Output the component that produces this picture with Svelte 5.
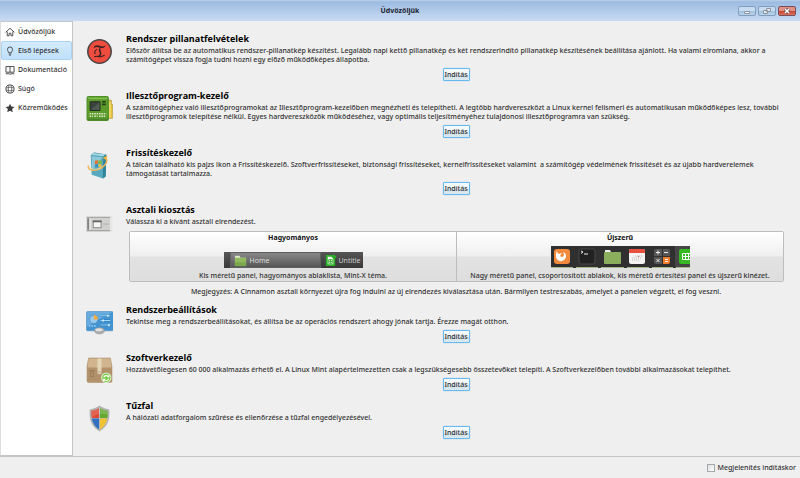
<script lang="ts">
  type Section = {
    id: string;
    title: string;
    lines: string[];
  };

  const before: Section[] = [
    {
      id: 'timeshift',
      title: 'Rendszer pillanatfelvételek',
      lines: [
        'Először állítsa be az automatikus rendszer-pillanatkép készítést. Legalább napi kettő pillanatkép és két rendszerindító pillanatkép készítésének beállítása ajánlott. Ha valami elromlana, akkor a',
        'számítógépet vissza fogja tudni hozni egy előző működőképes állapotba.'
      ]
    },
    {
      id: 'drivers',
      title: 'Illesztőprogram-kezelő',
      lines: [
        'A számítógéphez való illesztőprogramokat az Illesztőprogram-kezelőben megnézheti és telepítheti. A legtöbb hardvereszközt a Linux kernel felismeri és automatikusan működőképes lesz, további',
        'illesztőprogramok telepítése nélkül. Egyes hardvereszközök működéséhez, vagy optimális teljesítményéhez tulajdonosi illesztőprogramra van szükség.'
      ]
    },
    {
      id: 'updates',
      title: 'Frissítéskezelő',
      lines: [
        'A tálcán található kis pajzs ikon a Frissítéskezelő. Szoftverfrissítéseket, biztonsági frissítéseket, kernelfrissítéseket valamint  a számítógép védelmének frissítését és az újabb hardverelemek',
        'támogatását tartalmazza.'
      ]
    }
  ];

  const after: Section[] = [
    {
      id: 'settings',
      title: 'Rendszerbeállítások',
      lines: ['Tekintse meg a rendszerbeállításokat, és állítsa be az operációs rendszert ahogy jónak tartja. Érezze magát otthon.']
    },
    {
      id: 'software',
      title: 'Szoftverkezelő',
      lines: ['Hozzávetőlegesen 60 000 alkalmazás érhető el. A Linux Mint alapértelmezetten csak a legszükségesebb összetevőket telepíti. A Szoftverkezelőben további alkalmazásokat telepíthet.']
    },
    {
      id: 'firewall',
      title: 'Tűzfal',
      lines: ['A hálózati adatforgalom szűrése és ellenőrzése a tűzfal engedélyezésével.']
    }
  ];

  const pages = [
    { id: 'home', label: 'Üdvözöljük' },
    { id: 'bulb', label: 'Első lépések' },
    { id: 'book', label: 'Dokumentáció' },
    { id: 'help', label: 'Súgó' },
    { id: 'star', label: 'Közreműködés' }
  ];

  let page = $state('bulb');
  let showAtStartup = $state(false);
</script>

{#snippet navIcon(id: string)}
  <svg class="nav-icon" viewBox="0 0 16 16" aria-hidden="true">
    {#if id === 'home'}
      <path d="M1 8.500 8 2l7 6.500M3.500 7.500V14h3v-4h3v4h3V7.500" />
    {:else if id === 'bulb'}
      <path d="M6 11C6 9 4 8.500 4 5.500a4 4 0 0 1 8 0C12 8.500 10 9 10 11ZM6 13h4M7 15h2" />
    {:else if id === 'book'}
      <path d="M1.500 2.500h13v9h-13ZM8 2.500v9M1 14h5.500l1.500 1 1.500-1H15" />
    {:else if id === 'help'}
      <circle cx="8" cy="8" r="6.500" />
      <path d="M6 2v12M10 2v12M2 6h12M2 10h12" stroke-width="1.200" />
      <circle cx="8" cy="8" r="2" fill="#fff" stroke="none" />
    {:else}
      <path class="solid" d="m8 1 2.100 4.700 5.100.6-3.800 3.400 1 5L8 12.200l-4.400 2.500 1-5L.8 6.300l5.100-.6Z" />
    {/if}
  </svg>
{/snippet}

{#snippet appIcon(id: string)}
  <svg class="app-icon" viewBox="0 0 52 52" aria-hidden="true">
    {#if id === 'timeshift'}
      <circle cx="26" cy="26" r="22.500" fill="#ee4c3f" stroke="#4c4545" stroke-width="3" />
      <path d="M15 19c1-5 6-6 11-4 5 2 8 2 12-1-2 5-6 6-11 5-4-1-9-3-10 0Z" fill="#35211f" />
      <path d="M27 20c-3 4 2 7 1 11 0 2-2 4-4 5" fill="none" stroke="#35211f" stroke-width="3" />
      <path d="M21 22c-5 3-5 6-3 9M16 36c5-3 8 1 12 0 4 0 5-3 8-2" fill="none" stroke="#35211f" stroke-width="2" />
    {:else if id === 'drivers'}
      <path d="M34 10h15v8h2v27H34Z" fill="#e5c33c" stroke="#a58a28" />
      <path d="M46 14v29" stroke="#fae991" stroke-width="2" />
      <rect x="2" y="3" width="41" height="46" rx="3" fill="#5b9b2c" stroke="#4d8e27" stroke-width="2" />
      <path d="M4 5h37v3H4Z" fill="#83bd50" />
      <rect x="8" y="13" width="19" height="17" rx="1" fill="#39423c" stroke="#24301f" stroke-width="2" />
      <path d="m9 29 17-15v15Z" fill="#4f5a52" />
      <path d="M31 13h7M31 18h7" stroke="#263d17" stroke-width="3" />
      <path d="M7 36h32M7 41h6m3 0h6m3 0h12" stroke="#dbe6c5" stroke-width="3" stroke-dasharray="3 1.500" />
      <path d="M3 47h40" stroke="#4b8329" stroke-width="3" />
    {:else if id === 'updates'}
      <path d="m10 5 6-4 23 4-2 42-6 4Z" fill="#256f84" />
      <path d="m9 6 25 2-1 43-22-7Z" fill="#58a9c0" />
      <path d="m9 6 6-4 24 3-5 3Z" fill="#a3dbe7" />
      <path d="m34 8 5-3-1 42-5 4Z" fill="#2b8499" />
      <path d="m11 8 21 2-20 24Z" fill="#a5d5df" opacity=".7" />
      <path d="m17 17 6-1v6l-6 1Z" fill="#e86c2a" />
      <path d="m24 16 6 1v6l-6-1Z" fill="#82bb3a" />
      <path d="m17 24 6-1v6l-6-1Z" fill="#378ac4" />
      <path d="m24 23 6 1v6l-6-1Z" fill="#edc448" />
      <path d="M5 26c-4 9 12 12 23 6 12-7 15-16 9-21" fill="none" stroke="#efb55a" stroke-width="3" />
      <path d="m32 11 9-4-1 9Z" fill="#f5b63f" />
      <path d="M6 27c1 7 15 8 23 3" fill="none" stroke="#fae5a7" stroke-width="1.500" />
    {:else if id === 'desktop'}
      <path d="M1 16h50v27H1Z" fill="#d0d0ce" />
      <path d="M1 16h48M1 42h48" stroke="#969694" stroke-width="2" />
      <path d="M4 18v22" stroke="#777" stroke-width="3" />
      <path d="M8 18v22" stroke="#e9e9e7" stroke-width="2" />
      <rect x="14" y="23" width="15" height="13" fill="#f5f5f4" stroke="#8d8d8b" stroke-width="2" />
      <path d="M13 24h17" stroke="#626260" stroke-width="3" />
      <path d="M33 29h11" stroke="#b2b2b0" stroke-width="2" />
      <path d="M46 15h6v29h-6Z" fill="#efefef" opacity=".7" />
    {:else if id === 'settings'}
      <rect x="1" y="5" width="51" height="37" rx="2" fill="#4594d2" stroke="#4188be" />
      <path d="M2 6h49L2 33Z" fill="#78b8e7" opacity=".7" />
      <circle cx="15" cy="20" r="8" fill="#9acbee" stroke="#3879b5" />
      <path d="M15 20V11a9 9 0 0 1 8 9Z" fill="#f2aa43" />
      <path d="M28 13h19M28 22h19M28 31h19" stroke="#2878bb" stroke-width="4" />
      <path d="M28 13h19M28 22h19M28 31h19" stroke="#a0d9fa" stroke-width="2" />
      <path d="M42 11v4M33 20v4M44 29v4" stroke="#d7edf9" stroke-width="3" />
      <path d="M7 34v-3m5 3v-3m5 3v-3" stroke="#8fc8ee" stroke-width="3" />
      <ellipse cx="26" cy="42" rx="10" ry="6" fill="#a8aaac" stroke="#999" />
      <ellipse cx="25" cy="40" rx="7" ry="3" fill="#e2e3e4" />
    {:else if id === 'software'}
      <path d="M5 2h42l3 16v28q0 3-3 3H5q-3 0-3-3V18Z" fill="#b99970" stroke="#a18562" />
      <path d="M5 3h42l2 17H3Z" fill="#d0b58e" />
      <path d="M3 21h46v26H3Z" fill="#b0916a" />
      <path d="M22 3h8v25h-8Z" fill="#e4d4b6" />
      <path d="M22 28h8v5h-8Z" fill="#d9c8a8" />
      <path d="M7 26h9M7 38h9M9 27v9m5-9v9" stroke="#967752" stroke-width="1.500" />
      <circle cx="39" cy="40" r="9" fill="#7ccb48" stroke="#e2f0d7" stroke-width="2" />
      <path d="M34 39c2-4 7-4 10-1M44 42c-2 4-7 4-10 1" fill="none" stroke="#fff" stroke-width="2" />
      <path d="m45 34v5h-5ZM33 47v-5h5Z" fill="#fff" />
    {:else}
      <path d="M26 2C19 7 13 8 8 9c-2 20 4 33 18 41 14-8 20-21 18-41-5-1-11-2-18-7Z" fill="#b4b8ba" stroke="#999" />
      <path d="M25 6v19H11c-1-4-1-8-1-14 6-1 10-2 15-5Z" fill="#df4934" />
      <path d="M27 6c5 3 9 4 15 5 0 6 0 10-1 14H27Z" fill="#67a832" />
      <path d="M11 26h14v21c-8-5-12-12-14-21Z" fill="#326fc1" />
      <path d="M27 26h14c-2 9-6 16-14 21Z" fill="#f0c431" />
      <path d="M10 11c6-1 11-3 16-6 5 3 10 5 16 6v7c-13-3-23-1-32 7Z" fill="#fff" opacity=".15" />
    {/if}
  </svg>
{/snippet}

{#snippet sectionRow(section: Section)}
  <section>
    {@render appIcon(section.id)}
    <div class="body">
      <h2>{section.title}</h2>
      <p>{section.lines.join('\n')}</p>
      <button class="launch">Indítás</button>
    </div>
  </section>
{/snippet}

<div class="window">
  <header>
    <h1>Üdvözöljük</h1>
    <div class="controls">
      <button aria-label="Kis méret">
        <svg viewBox="0 0 18 10"><path d="M6.500 5.500h5v2h-5Z" fill="#f5f7f9" stroke="#8b96a5" /></svg>
      </button>
      <button aria-label="Előző méret">
        <svg viewBox="0 0 18 10"><path d="M8.500 2.500h4v3h-4ZM5.500 4.500h4v3h-4Z" fill="#e4e8ed" stroke="#8b96a5" /></svg>
      </button>
      <button class="close" aria-label="Bezárás">
        <svg viewBox="0 0 18 10"><path d="m7 3 4 4m0-4-4 4" stroke="#71494a" stroke-width="3" /><path d="m7 3 4 4m0-4-4 4" stroke="#fff" stroke-width="1.500" /></svg>
      </button>
    </div>
  </header>

  <div class="main">
    <nav>
      {#each pages as item}
        <button class:active={page === item.id} onclick={() => (page = item.id)}>
          {@render navIcon(item.id)}
          <span>{item.label}</span>
        </button>
      {/each}
    </nav>

    <main>
      {#each before as section}
        {@render sectionRow(section)}
      {/each}

      <section class="layout-section">
        {@render appIcon('desktop')}
        <div class="body">
          <h2>Asztali kiosztás</h2>
          <p>Válassza ki a kívánt asztali elrendezést.</p>
          <div class="choices">
            <button>
              <strong>Hagyományos</strong>
              <span class="preview">
                <span class="panel classic">
                  <span class="task current">
                    <svg viewBox="0 0 14 14" aria-hidden="true">
                      <path d="M1 2h5l1 2h6v9H1Z" fill="#dce8c9" />
                      <path d="M1 4h12v9H1Z" fill="#91b95e" />
                      <path d="M1 9h12v4H1Z" fill="#7ba74b" />
                    </svg>
                    Home
                  </span>
                  <span class="task">
                    <svg viewBox="0 0 14 14" aria-hidden="true">
                      <path d="M2 1h7l3 3v9H2Z" fill="#2cae28" />
                      <path d="M4 3h4l2 2v6H4Z" fill="#f2faed" />
                      <path d="M5 6h4v4H5Zm0 2h4M7 6v4" fill="none" stroke="#41b13b" />
                      <path d="m10 1 3 3" stroke="#2cae28" stroke-width="2" />
                    </svg>
                    Untitle
                  </span>
                </span>
              </span>
              <span>Kis méretű panel, hagyományos ablaklista, Mint-X téma.</span>
            </button>
            <button>
              <strong>Újszerű</strong>
              <span class="preview">
                <svg class="panel modern" viewBox="0 0 139 22" aria-hidden="true">
                  <path d="M0 0h139v22H0Z" fill="#303030" />
                  <path d="M124 0h15v22h-15Z" fill="#464646" />
                  <path d="M0 21.500h22m3 0h22m3 0h23m3 0h22m3 0h21m3 0h14" stroke="#a3b98a" />
                  <rect x="3" y="3" width="16" height="15" rx="3" fill="#f38b3c" />
                  <path d="M6 5q0 2 2 3l3-1-2 3c2 2 4 1 4-2l-1-2c3 1 4 4 2 7-3 4-9 2-9-3 0-2 0-3 1-5Z" fill="#fff" />
                  <rect x="28" y="3" width="16" height="15" rx="2" fill="#222" stroke="#474747" />
                  <path d="m30 5 2 1-2 1.500M33 8h4" fill="none" stroke="#eee" />
                  <path d="M54 4h5l1 2h9v5H54Z" fill="#edf0e7" />
                  <rect x="53" y="6" width="17" height="12" rx="1" fill="#8bae5c" />
                  <rect x="78" y="3" width="16" height="15" rx="2" fill="#f4f3f2" />
                  <path d="M78 7V5q0-2 2-2h12q2 0 2 2v2Z" fill="#e84f3e" />
                  <path d="M84 10h7M81 12h10M81 14h7" stroke="#bbb" stroke-dasharray="1 1" />
                  <path d="M87 10h1v1h-1Z" fill="#e87062" />
                  <path d="M105 3h6v7h-8V5q0-2 2-2Zm7 0h5q2 0 2 2v5h-7ZM103 11h8v7h-6q-2 0-2-2Z" fill="#575757" />
                  <path d="M112 11h7v5q0 2-2 2h-5Z" fill="#f17d29" />
                  <path d="M105 6.500h4M107 4.500v4M113 6.500h4M105.500 13l3 3m0-3-3 3M114 13.500h3m-3 2h3" stroke="#eee" />
                  <path d="M139 3h-9q-2 0-2 2v11q0 2 2 2h9Z" fill="#35b820" />
                  <path d="M131.500 7.500h8m-8 3h8m-8 3h8m-8-6v6m3-6v6m3-6v6" stroke="#fff" />
                </svg>
              </span>
              <span>Nagy méretű panel, csoportosított ablakok, kis méretű értesítési panel és újszerű kinézet.</span>
            </button>
          </div>
          <p class="note">Megjegyzés: A Cinnamon asztali környezet újra fog indulni az új elrendezés kiválasztása után. Bármilyen testreszabás, amelyet a panelen végzett, el fog veszni.</p>
        </div>
      </section>

      {#each after as section}
        {@render sectionRow(section)}
      {/each}
    </main>
  </div>

  <footer>
    <label>
      <input type="checkbox" bind:checked={showAtStartup} />
      Megjelenítés indításkor
    </label>
  </footer>
</div>

<style>
  :global(body) {
    margin: 0;
    background: #efefef;
  }

  .window {
    display: flex;
    flex-direction: column;
    min-height: 100vh;
    color: #303030;
    font-family: 'Noto Sans', 'Open Sans', sans-serif;
    font-size: 7px;
    font-weight: 500;
    line-height: 9px;
  }

  button {
    padding: 0;
    color: inherit;
    font: inherit;
  }

  header {
    display: grid;
    grid-template-columns: 1fr auto 1fr;
    align-items: center;
    height: 21px;
    background: linear-gradient(#b9cfeb 0, #9dbce2 2px, #c9dbf3 100%);
  }

  h1 {
    grid-column: 2;
    margin: 0;
    color: #1d2532;
    font-size: 7px;
    font-weight: 700;
  }

  .controls {
    display: flex;
    justify-content: flex-end;
    gap: 2px;
    padding-right: 4px;
  }

  .controls button {
    display: flex;
    align-items: center;
    justify-content: center;
    width: 18px;
    height: 10px;
    border: 1px solid #829dbd;
    border-radius: 2px;
    background: linear-gradient(#c8dcf1 50%, #a0c0df 50%, #bad4eb);
  }

  .controls svg {
    flex: none;
    width: 18px;
    height: 10px;
  }

  .controls .close {
    border-color: #7c4c5b;
    background: linear-gradient(#df9183 50%, #c4412e 50%, #d97661);
  }

  .main {
    display: flex;
    flex: 1;
  }

  nav {
    flex: none;
    box-sizing: border-box;
    width: 73px;
    border: 1px solid #c4c4c4;
    border-left-color: #ddd;
    background: #fff;
  }

  nav button {
    display: flex;
    align-items: center;
    gap: 3px;
    box-sizing: border-box;
    width: 100%;
    height: 19px;
    padding-left: 3px;
    border: 1px solid transparent;
    background: none;
    white-space: nowrap;
  }

  nav button.active {
    border-color: #acd3f2;
    border-radius: 2px;
    background: linear-gradient(#d3eafe, #bfe0fc);
  }

  .nav-icon {
    flex: none;
    width: 10px;
    height: 10px;
    fill: none;
    stroke: #444;
    stroke-width: 1.5;
  }

  .nav-icon .solid {
    fill: #3c3c3c;
    stroke: none;
  }

  main {
    flex: 1;
    min-width: 0;
    padding: 12px 14px 0 13px;
  }

  section {
    display: flex;
    gap: 13px;
    padding-bottom: 9px;
  }

  .layout-section {
    padding-bottom: 8px;
  }

  .app-icon {
    flex: none;
    width: 27px;
    height: 27px;
    margin-top: 5px;
  }

  .body {
    display: flex;
    flex: 1;
    flex-direction: column;
    min-width: 0;
  }

  h2 {
    margin: 0 0 1px;
    color: #000;
    font-family: 'Open Sans', 'Noto Sans', sans-serif;
    font-size: 9px;
    font-weight: 700;
    line-height: 12px;
  }

  p {
    margin: 0;
    white-space: pre;
  }

  .launch {
    align-self: center;
    box-sizing: border-box;
    width: 27px;
    height: 13px;
    margin-top: 4px;
    border: 1px solid #68b9ef;
    border-radius: 1px;
    background: linear-gradient(#f3f8fa 45%, #d0e0e7 55%, #dceaf0);
    box-shadow: 0 0 1px #68b9ef;
    line-height: 11px;
  }

  .choices {
    display: flex;
    box-sizing: border-box;
    margin: 5px 2px 5px 3px;
    border: 1px solid #bdbdbd;
    border-radius: 2px;
  }

  .choices button {
    display: flex;
    flex: 1;
    flex-direction: column;
    align-items: center;
    min-width: 0;
    padding: 1px 0;
    border: 0;
    background: linear-gradient(#fff, #efefef 48%, #e2e2e2 52%, #dedede);
    white-space: nowrap;
  }

  .choices button + button {
    border-left: 1px solid #bdbdbd;
  }

  .choices strong {
    color: #111;
  }

  .preview {
    display: flex;
    align-items: flex-end;
    height: 29px;
  }

  .panel {
    display: flex;
    width: 139px;
    margin-bottom: 3px;
    overflow: hidden;
  }

  .classic {
    box-sizing: border-box;
    height: 16px;
    padding-left: 6px;
    background: linear-gradient(#555, #383838);
  }

  .modern {
    height: 22px;
  }

  .task {
    display: flex;
    flex: none;
    align-items: center;
    gap: 2px;
    padding-left: 3px;
    color: #ccc;
    font-weight: 400;
  }

  .task.current {
    box-sizing: border-box;
    width: 91px;
    gap: 3px;
    border: 1px solid #606060;
    background: linear-gradient(#888, #565656);
    color: #ddd;
  }

  .task svg {
    width: 13px;
    height: 13px;
  }

  .note {
    text-align: center;
  }

  footer {
    display: flex;
    align-items: center;
    justify-content: flex-end;
    height: 21px;
    padding-right: 4px;
    border-top: 1px solid #c4c4c4;
  }

  label {
    display: flex;
    align-items: center;
    gap: 2px;
  }

  input {
    box-sizing: border-box;
    width: 8px;
    height: 8px;
    margin: 0;
    border: 1px solid #a5a9ad;
    background: linear-gradient(135deg, #dedede, #fff);
    appearance: none;
  }

  input:checked {
    background: #4a90c9;
  }
</style>
